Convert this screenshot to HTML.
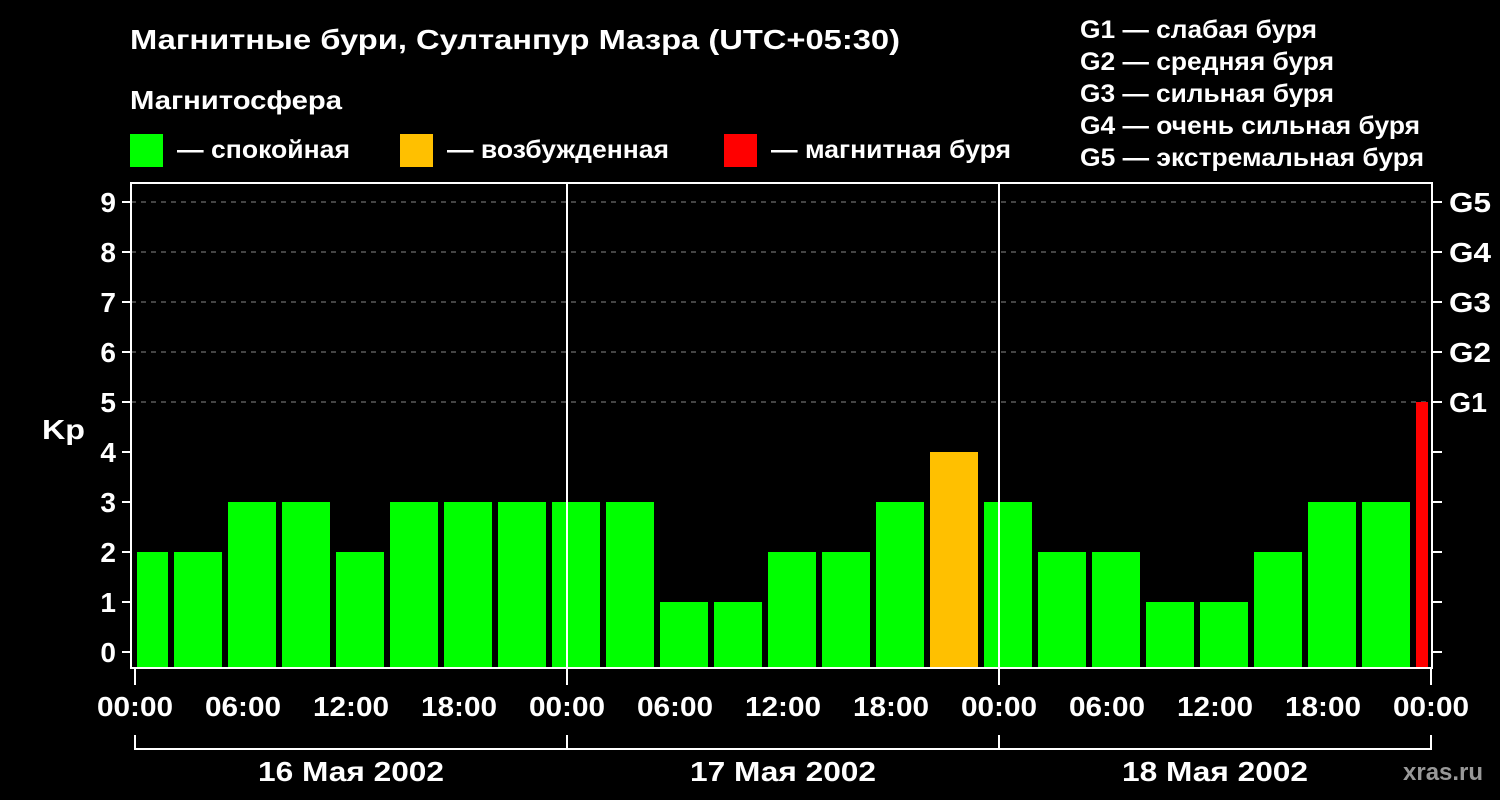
<!DOCTYPE html>
<html><head><meta charset="utf-8"><style>
html,body{margin:0;padding:0;background:#000;}
svg{display:block}
text{font-family:"Liberation Sans",Arial,sans-serif;font-weight:bold;fill:#fff}
</style></head><body>
<svg width="1500" height="800" viewBox="0 0 1500 800" xmlns="http://www.w3.org/2000/svg">
<rect width="1500" height="800" fill="#000"/>
<text x="130" y="49" font-size="28" textLength="770" lengthAdjust="spacingAndGlyphs">Магнитные бури, Султанпур Мазра (UTC+05:30)</text>
<text x="130" y="109" font-size="26" textLength="212" lengthAdjust="spacingAndGlyphs">Магнитосфера</text>
<rect x="130" y="134" width="33" height="33" fill="#00ff00"/>
<text x="177" y="158" font-size="25" textLength="173" lengthAdjust="spacingAndGlyphs">— спокойная</text>
<rect x="400" y="134" width="33" height="33" fill="#ffc000"/>
<text x="447" y="158" font-size="25" textLength="222" lengthAdjust="spacingAndGlyphs">— возбужденная</text>
<rect x="724" y="134" width="33" height="33" fill="#ff0000"/>
<text x="771" y="158" font-size="25" textLength="240" lengthAdjust="spacingAndGlyphs">— магнитная буря</text>
<g font-size="25">
<text x="1080" y="38" textLength="237" lengthAdjust="spacingAndGlyphs">G1 — слабая буря</text>
<text x="1080" y="70" textLength="254" lengthAdjust="spacingAndGlyphs">G2 — средняя буря</text>
<text x="1080" y="102" textLength="254" lengthAdjust="spacingAndGlyphs">G3 — сильная буря</text>
<text x="1080" y="134" textLength="340" lengthAdjust="spacingAndGlyphs">G4 — очень сильная буря</text>
<text x="1080" y="166" textLength="344" lengthAdjust="spacingAndGlyphs">G5 — экстремальная буря</text>
</g>
<g stroke="#888" stroke-width="1" stroke-dasharray="5,5">
<line x1="131" y1="202" x2="1432" y2="202"/>
<line x1="131" y1="252" x2="1432" y2="252"/>
<line x1="131" y1="302" x2="1432" y2="302"/>
<line x1="131" y1="352" x2="1432" y2="352"/>
<line x1="131" y1="402" x2="1432" y2="402"/>
</g>
<g fill="#00ff00">
<rect x="137" y="552" width="31" height="116"/>
<rect x="174" y="552" width="48" height="116"/>
<rect x="228" y="502" width="48" height="166"/>
<rect x="282" y="502" width="48" height="166"/>
<rect x="336" y="552" width="48" height="116"/>
<rect x="390" y="502" width="48" height="166"/>
<rect x="444" y="502" width="48" height="166"/>
<rect x="498" y="502" width="48" height="166"/>
<rect x="552" y="502" width="48" height="166"/>
<rect x="606" y="502" width="48" height="166"/>
<rect x="660" y="602" width="48" height="66"/>
<rect x="714" y="602" width="48" height="66"/>
<rect x="768" y="552" width="48" height="116"/>
<rect x="822" y="552" width="48" height="116"/>
<rect x="876" y="502" width="48" height="166"/>
<rect x="984" y="502" width="48" height="166"/>
<rect x="1038" y="552" width="48" height="116"/>
<rect x="1092" y="552" width="48" height="116"/>
<rect x="1146" y="602" width="48" height="66"/>
<rect x="1200" y="602" width="48" height="66"/>
<rect x="1254" y="552" width="48" height="116"/>
<rect x="1308" y="502" width="48" height="166"/>
<rect x="1362" y="502" width="48" height="166"/>
</g>
<rect x="930" y="452" width="48" height="216" fill="#ffc000"/>
<rect x="1416" y="402" width="12" height="266" fill="#ff0000"/>
<g stroke="#fff" stroke-width="2" fill="none">
<polyline points="131,668 131,183 1432,183"/>
<line x1="1432" y1="182" x2="1432" y2="669"/>
<line x1="130" y1="668" x2="1433" y2="668"/>
<line x1="567" y1="183" x2="567" y2="668"/>
<line x1="999" y1="183" x2="999" y2="668"/>
</g>
<g stroke="#fff" stroke-width="2">
<line x1="122" y1="202" x2="131" y2="202"/><line x1="122" y1="252" x2="131" y2="252"/>
<line x1="122" y1="302" x2="131" y2="302"/><line x1="122" y1="352" x2="131" y2="352"/>
<line x1="122" y1="402" x2="131" y2="402"/><line x1="122" y1="452" x2="131" y2="452"/>
<line x1="122" y1="502" x2="131" y2="502"/><line x1="122" y1="552" x2="131" y2="552"/>
<line x1="122" y1="602" x2="131" y2="602"/><line x1="122" y1="652" x2="131" y2="652"/>
<line x1="1432" y1="202" x2="1442" y2="202"/><line x1="1432" y1="252" x2="1442" y2="252"/>
<line x1="1432" y1="302" x2="1442" y2="302"/><line x1="1432" y1="352" x2="1442" y2="352"/>
<line x1="1432" y1="402" x2="1442" y2="402"/><line x1="1432" y1="452" x2="1442" y2="452"/>
<line x1="1432" y1="502" x2="1442" y2="502"/><line x1="1432" y1="552" x2="1442" y2="552"/>
<line x1="1432" y1="602" x2="1442" y2="602"/><line x1="1432" y1="652" x2="1442" y2="652"/>
<line x1="135" y1="668" x2="135" y2="685"/><line x1="567" y1="668" x2="567" y2="685"/>
<line x1="999" y1="668" x2="999" y2="685"/><line x1="1431" y1="668" x2="1431" y2="685"/>
</g>
<g stroke="#fff" stroke-width="2" fill="none">
<polyline points="135,735 135,749 1431,749 1431,735"/>
<line x1="567" y1="735" x2="567" y2="749"/>
<line x1="999" y1="735" x2="999" y2="749"/>
</g>
<g font-size="28" text-anchor="end">
<text x="116" y="212">9</text><text x="116" y="262">8</text><text x="116" y="312">7</text>
<text x="116" y="362">6</text><text x="116" y="412">5</text><text x="116" y="462">4</text>
<text x="116" y="512">3</text><text x="116" y="562">2</text><text x="116" y="612">1</text>
<text x="116" y="662">0</text>
</g>
<text x="42" y="439" font-size="28" textLength="43" lengthAdjust="spacingAndGlyphs">Kp</text>
<g font-size="28">
<text x="1449" y="212" textLength="42" lengthAdjust="spacingAndGlyphs">G5</text>
<text x="1449" y="262" textLength="42" lengthAdjust="spacingAndGlyphs">G4</text>
<text x="1449" y="312" textLength="42" lengthAdjust="spacingAndGlyphs">G3</text>
<text x="1449" y="362" textLength="42" lengthAdjust="spacingAndGlyphs">G2</text>
<text x="1449" y="412" textLength="38" lengthAdjust="spacingAndGlyphs">G1</text>
</g>
<g font-size="28">
<text x="97" y="716" textLength="76" lengthAdjust="spacingAndGlyphs">00:00</text>
<text x="205" y="716" textLength="76" lengthAdjust="spacingAndGlyphs">06:00</text>
<text x="313" y="716" textLength="76" lengthAdjust="spacingAndGlyphs">12:00</text>
<text x="421" y="716" textLength="76" lengthAdjust="spacingAndGlyphs">18:00</text>
<text x="529" y="716" textLength="76" lengthAdjust="spacingAndGlyphs">00:00</text>
<text x="637" y="716" textLength="76" lengthAdjust="spacingAndGlyphs">06:00</text>
<text x="745" y="716" textLength="76" lengthAdjust="spacingAndGlyphs">12:00</text>
<text x="853" y="716" textLength="76" lengthAdjust="spacingAndGlyphs">18:00</text>
<text x="961" y="716" textLength="76" lengthAdjust="spacingAndGlyphs">00:00</text>
<text x="1069" y="716" textLength="76" lengthAdjust="spacingAndGlyphs">06:00</text>
<text x="1177" y="716" textLength="76" lengthAdjust="spacingAndGlyphs">12:00</text>
<text x="1285" y="716" textLength="76" lengthAdjust="spacingAndGlyphs">18:00</text>
<text x="1393" y="716" textLength="76" lengthAdjust="spacingAndGlyphs">00:00</text>
<text x="258" y="781" textLength="186" lengthAdjust="spacingAndGlyphs">16 Мая 2002</text>
<text x="690" y="781" textLength="186" lengthAdjust="spacingAndGlyphs">17 Мая 2002</text>
<text x="1122" y="781" textLength="186" lengthAdjust="spacingAndGlyphs">18 Мая 2002</text>
</g>
<text x="1403" y="780" font-size="24" style="fill:#999">xras.ru</text>
</svg>
</body></html>
